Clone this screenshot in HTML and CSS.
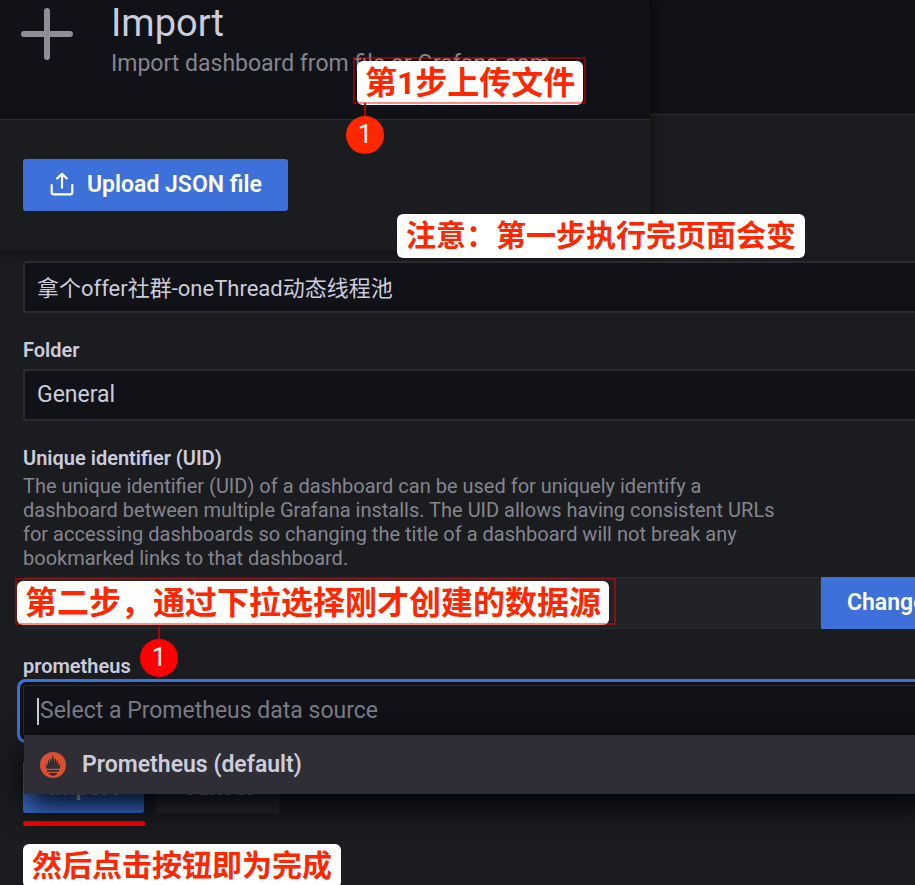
FILE: index.html
```
<!DOCTYPE html>
<html lang="zh-CN">

<head>
    <meta charset="UTF-8">
    <meta name="viewport" content="width=device-width, initial-scale=1.0">
    <title>Import dashboard</title>
    <link rel="stylesheet" href="styles.css">
</head>

<body>
    <div class="page">
        <div class="top">
            <section class="upload-panel">
                <header class="page-header">
                    <svg class="plus-icon" viewBox="0 0 52 52" aria-hidden="true">
                        <path d="M26 3v46M3 26h46" />
                    </svg>
                    <div>
                        <h1>Import</h1>
                        <p class="subtitle">Import dashboard from file or Grafana.com</p>
                    </div>
                </header>
                <div class="upload-body">
                    <button type="button" class="btn btn-primary btn-upload">
                        <svg class="upload-icon" viewBox="0 0 24 24" aria-hidden="true">
                            <path d="M2.500 13v6.500a2 2 0 0 0 2 2h15a2 2 0 0 0 2-2v-6.500M12 15.500V3M7.500 7l4.500-4.500 4.500 4.500" />
                        </svg>
                        Upload JSON file
                    </button>
                </div>
            </section>
            <div class="top-rest">
                <div class="rest-header"></div>
            </div>

            <div class="frame frame-upload"></div>
            <div class="note note-large note-upload">第1步上传文件</div>
            <span class="badge badge-upload">1</span>
            <div class="note note-warning">注意：第一步执行完页面会变</div>
        </div>

        <form class="import-form">
            <input type="text" class="control control-name" aria-label="Name" value="拿个offer社群-oneThread动态线程池">

            <div class="field">
                <label for="folder">Folder</label>
                <select id="folder" class="control">
                    <option>General</option>
                </select>
            </div>

            <div class="field">
                <label for="uid">Unique identifier (UID)</label>
                <p class="description">The unique identifier (UID) of a dashboard can be used for uniquely identify a
                    dashboard between multiple Grafana installs. The UID allows having consistent URLs for accessing
                    dashboards so changing the title of a dashboard will not break any bookmarked links to that
                    dashboard.</p>
                <div class="uid-row">
                    <input type="text" id="uid" class="control" disabled>
                    <button type="button" class="btn btn-primary btn-change">Change</button>
                    <div class="frame frame-source"></div>
                    <div class="note note-large note-source">第二步，通过下拉选择刚才创建的数据源</div>
                    <span class="badge badge-source">1</span>
                </div>
            </div>

            <div class="field">
                <label for="datasource">prometheus</label>
                <div class="picker">
                    <input type="text" id="datasource" class="control" placeholder="Select a Prometheus data source"
                        autocomplete="off">
                    <span class="caret"></span>
                    <ul class="menu" role="listbox">
                        <li role="option">
                            <svg class="prometheus-icon" viewBox="0 0 26 26" aria-hidden="true">
                                <circle cx="13" cy="13" r="13" fill="#da4e31" />
                                <g fill="#2f2e36">
                                    <path d="M7.500 14.800C6.300 13.800 5.900 13 5.800 12.200l2.300.5C7.400 10.500 8 9 8.300 7.700c1 1 .9 2.300 1.600 3.500C9.700 8.500 10.300 7 10.600 6c.8 1.300.6 3 1.100 4 .1-3 .2-5.300 1.300-7.200 0 2.400 1.200 4.200 1.500 7.200.6-1.500.5-2.700.5-4 1.300 1.500 1.300 3.200 1.100 5.200.8-1.200.9-2.400 1.100-3.300.9 1.700 1.200 3 .7 4.800l2.500-.5c-.1 1-.6 1.800-1.700 2.600z" />
                                    <path d="M5.500 14.300h15l-1.200 2.500H6.700zM7 18h12v1.800H7zM8.800 21h8.400c-.5 1.600-1.800 2-2.300 2.200-.8.800-3 .8-3.800 0-.8-.3-2-.8-2.300-2.200z" />
                                </g>
                            </svg>
                            Prometheus (default)
                        </li>
                    </ul>
                </div>
            </div>

            <div class="actions">
                <button type="button" class="btn btn-primary">Import</button>
                <button type="button" class="btn btn-secondary">Cancel</button>
            </div>
            <div class="underline"></div>
            <div class="note note-done">然后点击按钮即为完成</div>
        </form>
    </div>
</body>

</html>
```
FILE: styles.css
```
:root {
    --canvas: #111217;
    --background: #1b1c1f;
    --border: #2b2c31;
    --text: #ccccdc;
    --text-muted: #85858f;
    --primary: #3d71d9;
    --red: #ff2600;
}

* {
    box-sizing: border-box;
}

body {
    margin: 0;
    background-color: var(--background);
    color: var(--text);
    font-family: Roboto, "Noto Sans CJK SC", sans-serif;
    font-size: 22px;
    line-height: 32px;
}

.page {
    overflow: hidden;
    min-height: 100vh;
}

/* Top: upload screen laid over the import screen */
.top {
    position: relative;
    display: flex;
}

.upload-panel {
    flex: 0 0 71%;
    box-shadow: 0 0 12px rgba(0, 0, 0, 0.6);
    z-index: 1;
}

.page-header {
    display: flex;
    gap: 38px;
    height: 120px;
    padding-left: 21px;
    background-color: var(--canvas);
    border-bottom: 1px solid var(--border);
}

.plus-icon {
    width: 52px;
    height: 52px;
    margin-top: 8px;
    fill: none;
    stroke: #8e8e99;
    stroke-width: 6;
    stroke-linecap: round;
}

h1 {
    margin: 0;
    font-size: 38px;
    font-weight: 400;
    line-height: 46px;
}

.subtitle {
    margin: 0;
    color: var(--text-muted);
    font-size: 23px;
    line-height: 36px;
}

.upload-body {
    padding: 39px 23px 40px;
    background-color: var(--background);
}

.top-rest {
    flex: 1;
}

.rest-header {
    height: 115px;
    background-color: var(--canvas);
    border-bottom: 1px solid var(--border);
}

/* Buttons */
.btn {
    height: 52px;
    padding: 0 26px 2px;
    border: none;
    border-radius: 3px;
    color: white;
    font-family: inherit;
    font-size: 23px;
    font-weight: 600;
    cursor: pointer;
}

.btn-primary {
    background-color: var(--primary);
}

.btn-secondary {
    background-color: #2a2b30;
    color: var(--text);
}

.btn-upload {
    display: flex;
    align-items: center;
    gap: 12px;
}

.upload-icon {
    width: 26px;
    height: 26px;
    fill: none;
    stroke: white;
    stroke-width: 2;
    stroke-linecap: round;
    stroke-linejoin: round;
}

/* Form, runs past the right edge of the window */
.import-form {
    margin: 10px -24px 0 23px;
}

.control {
    display: block;
    width: 100%;
    height: 52px;
    padding: 0 12px 2px;
    background-color: var(--canvas);
    border: 2px solid var(--border);
    border-radius: 3px;
    color: var(--text);
    font-family: inherit;
    font-size: 23px;
    appearance: none;
    outline: none;
}

.control-name {
    font-size: 22px;
}

.control::placeholder {
    color: #7b7b86;
    opacity: 1;
}

.field {
    margin-top: 23px;
}

.field label {
    display: block;
    font-size: 20px;
    font-weight: 600;
    line-height: 28px;
    margin-bottom: 5px;
}

.description {
    max-width: 760px;
    margin: -3px 0 7px;
    color: var(--text-muted);
    font-size: 20px;
    line-height: 24px;
}

.uid-row {
    position: relative;
    display: flex;
}

.uid-row .control {
    flex: 1;
    border-width: 1px;
    background-color: #222327;
}

.btn-change {
    width: 118px;
    border-radius: 0;
}

/* Data source picker */
.picker {
    position: relative;
    z-index: 2;
}

.picker .control {
    border-width: 1px;
    padding: 0 16px 2px;
    box-shadow: 0 0 0 3px var(--canvas), 0 0 0 6px var(--primary);
}

.caret {
    position: absolute;
    top: 13px;
    left: 14px;
    width: 2px;
    height: 27px;
    background-color: var(--text);
}

.menu {
    position: absolute;
    top: 50px;
    left: 1px;
    right: 0;
    margin: 0;
    padding: 0;
    list-style: none;
    background-color: #2f2e36;
    box-shadow: 0 12px 32px #010409;
}

.menu li {
    display: flex;
    align-items: center;
    gap: 16px;
    height: 59px;
    padding: 0 16px;
    font-size: 23px;
    font-weight: 600;
}

.prometheus-icon {
    width: 26px;
    height: 26px;
}

.actions {
    display: flex;
    gap: 12px;
    margin-top: 24px;
}

.actions .btn {
    padding-bottom: 0;
}

.underline {
    width: 122px;
    height: 5px;
    margin-top: 8px;
    border-radius: 3px;
    background-color: red;
}

/* Red tutorial notes */
.note {
    width: max-content;
    height: 44px;
    padding: 0 9px;
    background-color: white;
    border-radius: 6px;
    color: var(--red);
    font-family: Roboto, "Noto Sans CJK SC", sans-serif;
    font-size: 30px;
    font-weight: 700;
    line-height: 44px;
    white-space: nowrap;
}

.note-large {
    padding: 0 8px;
    font-size: 32px;
}

.note-upload,
.note-warning,
.note-source,
.frame,
.badge {
    position: absolute;
    z-index: 3;
}

.note-upload {
    top: 61px;
    left: 357px;
}

.note-warning {
    top: 214px;
    left: 397px;
}

.note-source {
    top: 4px;
    left: -6px;
}

.frame {
    z-index: 4;
    height: 47px;
    border: 2px solid rgba(255, 0, 0, 0.45);
}

.frame-upload {
    top: 57px;
    left: 353px;
    width: 233px;
}

.frame-source {
    top: 1px;
    left: -8px;
    width: 601px;
}

.badge {
    width: 38px;
    height: 38px;
    border-radius: 50%;
    background-color: var(--red);
    color: white;
    font-family: Roboto, sans-serif;
    font-size: 25px;
    line-height: 38px;
    text-align: center;
}

/* line joining the badge to its frame */
.badge::before {
    content: "";
    position: absolute;
    bottom: 100%;
    left: 18px;
    width: 2px;
    height: 13px;
    background-color: #a00808;
}

.badge-upload {
    top: 116px;
    left: 346px;
}

.badge-source {
    top: 62px;
    left: 117px;
    background-color: red;
}

.note-done {
    margin-top: 18px;
}
```
